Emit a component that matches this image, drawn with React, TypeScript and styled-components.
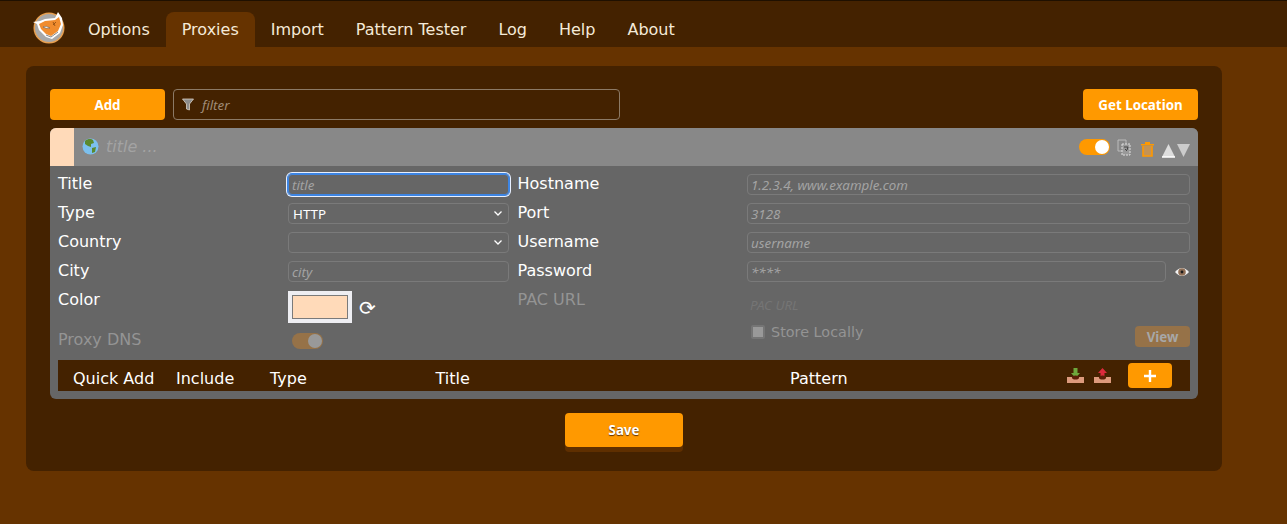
import React from 'react';
import styled, { createGlobalStyle } from 'styled-components';

const Global = createGlobalStyle`
  html, body { margin: 0; padding: 0; background: #663300; }
  body { font-family: "DejaVu Sans", sans-serif; font-size: 16px; color: #fff; height: 524px; overflow: hidden; }
  * { box-sizing: border-box; }
`;
const Nav = styled.nav`
  height: 47px; background: #442200; border-top: 1px solid #1f1000;
  display: flex; align-items: flex-end; padding-left: 32px;
`;
const LogoSlot = styled.span`width: 34px; height: 34px; margin-right: 6px; align-self: center; margin-top: 6px; display: block;`;
const Tab = styled.a<{ $active?: boolean }>`
  height: 35px; padding: 0 16px; display: flex; align-items: center; color: #f5ead8;
  font-size: 16px; border-radius: 8px 8px 0 0; background: ${p => (p.$active ? '#663300' : 'transparent')};
`;
const Section = styled.section`
  width: 1196px; height: 405px; margin: 19px 0 0 26px; padding: 23px 24px 0;
  background: #442200; border-radius: 8px;
`;
const Toolbar = styled.div`display: flex; gap: 8px; height: 31px; margin-bottom: 8px;`;
const OrangeButton = styled.button`
  border: 0; background: #ff9900; color: #fff; font: bold 13.333px "Noto Sans", sans-serif;
  border-radius: 4px; width: 115px; height: 31px; padding: 0;
`;
const FilterBox = styled.label`
  width: 447px; height: 31px; border: 1px solid #8c7a66; border-radius: 4px;
  display: flex; align-items: center; padding-left: 8px; gap: 8px; color: #a08c78;
  font: italic 13.333px "Noto Sans", sans-serif;
`;
const Spacer = styled.div`flex: 1;`;
const Card = styled.article`
  height: 271px; background: #666; border-radius: 6px; overflow: hidden;
`;
const CardHeader = styled.header`
  height: 38px; background: #888; display: flex; align-items: center;
`;
const Swatch = styled.div`width: 24px; height: 100%; background: #ffdab9; margin-right: 8px;`;
const HeaderTitle = styled.span`
  margin-left: 7px; font: italic 16px "DejaVu Sans", sans-serif; color: #a3a3a3; flex: 1; padding-bottom: 2px;
`;
const HeaderTools = styled.div`display: flex; align-items: center; padding-right: 8px;`;
const Toggle = styled.span<{ $dim?: boolean }>`
  display: flex; align-items: center; justify-content: flex-end; padding-right: 1px;
  width: 31px; height: 16px; border-radius: 8px; background: ${p => (p.$dim ? '#967248' : '#ff9900')};
`;
const Knob = styled.span<{ $dim?: boolean }>`
  width: 14px; height: 14px; border-radius: 50%; background: ${p => (p.$dim ? '#999' : '#fff')};
`;
const FormGrid = styled.div`
  display: grid; grid-template-columns: 459.5px 672.5px; padding: 8px 0 0 8px; height: 194px;
`;
const Column = styled.div`display: flex; flex-direction: column; gap: 8px;`;
const Row = styled.div`display: grid; grid-template-columns: 230px 1fr; align-items: start; height: 21px;`;
const RightRow = styled(Row)`grid-template-columns: 229.5px 1fr;`;
const TallRow = styled(Row)`height: 32px;`;
const RightTallRow = styled(RightRow)`height: 28px; margin-bottom: -4px;`;
const StoreOuter = styled(RightRow)`height: 25px;`;
const Label = styled.label<{ $dim?: boolean }>`
  font-size: 16px; line-height: 19px; color: ${p => (p.$dim ? '#949494' : '#fff')};
`;
const Field = styled.input`
  width: 100%; height: 21px; border: 1px solid #7a7a7a; border-radius: 4px; background: transparent;
  padding: 1px 3px 0; font: 13.333px "Noto Sans", sans-serif; color: #fff; outline: none;
  &::placeholder { color: #a3a3a3; font-style: italic; opacity: 1; }
`;
const CityField = styled(Field)`width: 221px;`;
const NarrowField = styled(Field)`width: 419px;`;
const FocusField = styled(Field)`
  width: 221px; border-color: #3d85e3;
  box-shadow: 0 0 0 1px #3d85e3, 0 0 0 2px #e8f0ff;
`;
const PacField = styled(Field)`
  border: 0; margin-top: 4px; &::placeholder { color: #757575; }
`;
const SelectBox = styled.div`
  width: 221px; height: 21px; border: 1px solid #7a7a7a; border-radius: 4px; padding: 0 6px 0 4px;
  display: flex; justify-content: space-between; align-items: center; font: 13.333px "Noto Sans", sans-serif;
`;
const ColorRow = styled.div`display: flex; align-items: center; gap: 7px;`;
const PasswordRow = styled(ColorRow)`gap: 0;`;
const ColorBox = styled.div`
  width: 64px; height: 32px; background: #ffdab9; border: 4px solid #eeeef2; outline: 1px solid #7a7a7a; outline-offset: -5px;
`;
const Refresh = styled.span`font-size: 20px; line-height: 32px; color: #fff; padding-top: 2px;`;
const ToggleCell = styled.div`padding: 3px 0 0 4px;`;
const StoreRow = styled.div`display: flex; justify-content: space-between; height: 25px; width: 443px;`;
const StoreLabel = styled.label`
  display: flex; align-items: center; gap: 6px; height: 20px; margin-left: 4px; color: #949494; font-size: 14.4px; line-height: 20px;
`;
const Check = styled.span`
  width: 14px; height: 14px; border: 2px solid #757575; background: #999; border-radius: 2px;
`;
const ViewButton = styled.button`
  width: 55px; height: 21px; margin-top: 4px; border: 0; padding: 0; border-radius: 4px; background: #967248;
  color: #a7a7a7; font: bold 13.333px "Noto Sans", sans-serif;
`;
const PatternHead = styled.div`
  margin: 0 8px; height: 31px; background: #442200;
  display: grid; grid-template-columns: 15px 103px 94px 165.5px 354.5px 277px 1fr; align-items: center;
  font-size: 16px; color: #fff;
`;
const HeadCell = styled.span`padding-top: 5px;`;
const HeadTools = styled.div`display: flex; align-items: center; gap: 10px;`;
const AddRow = styled.button`
  width: 44px; height: 25px; background: #ff9900; border: 0; border-radius: 4px; margin: 0 0 0 7px; padding: 0;
  display: flex; align-items: center; justify-content: center;
`;
const SaveWrap = styled.div`display: flex; justify-content: center; margin-top: 14px;`;
const SaveButton = styled.button`
  width: 118px; height: 34px; background: #ff9900; color: #fff; border: 0; border-radius: 4px;
  box-shadow: 0 5px 0 #5f2f00; font: bold 13.333px "Noto Sans", sans-serif; text-shadow: 0 1px 1px #5f2f00;
`;
const Icon = styled.svg<{ $ml?: number; $mt?: number }>`
  display: block; flex: none; margin-left: ${p => p.$ml ?? 0}px; margin-top: ${p => p.$mt ?? 0}px;
`;

const Logo = () => (
  <svg width="34" height="34" viewBox="0 0 34 34">
    <circle cx="17" cy="18" r="15.5" fill="#e8a050" />
    <circle cx="17" cy="18" r="14" fill="#a8a8a8" />
    <path d="M5 14 L1 12 L8 11 L13 9 L23 8 L26 2 L30 8 L31 15 L28 23 L20 29 L14 27 L7 20 Z" fill="#fff" />
    <path d="M7 14 L13 11 L23 10 L27 7 L29 14 L26 21 L19 26 L14 24 L9 19 Z" fill="#f08c2e" />
    <path d="M11 17 Q14 15 18 18 Q14 19 11 17 Z" fill="#fff" stroke="#6a5a4a" strokeWidth="0.6" />
    <path d="M21 15 L24 12 M23 16 L21 12" stroke="#8a4a10" strokeWidth="0.8" />
    <path d="M14 25 L19 27 L26 22" fill="none" stroke="#888" strokeWidth="1" />
  </svg>
);
const GlobeSvg = styled.svg`display: block; margin-bottom: 1px;`;
const Globe = () => (
  <GlobeSvg width="17" height="17" viewBox="0 0 17 17">
    <circle cx="8.5" cy="8.5" r="8" fill="#7cc0ee" />
    <path d="M3 3 C6 0 10 1 11 2 L12 5 L9 6 L9 9 L6 8 L3 6 Z M10 10 L14 9 L13 14 L10 15 Z" fill="#5b8a2e" />
  </GlobeSvg>
);
const Funnel = () => (
  <Icon width="12" height="13" viewBox="0 0 12 13">
    <path d="M0.5 1 H11.5 L7.5 6 V12 L4.5 11 V6 Z" fill="#8c8c8c" stroke="#d8cfc4" strokeWidth="0.8" />
  </Icon>
);
const Copy = () => (
  <Icon width="14" height="17" viewBox="0 0 14 17" $ml={7} $mt={1}>
    <path d="M1 1 H9 V12 H1 Z" fill="#888" stroke="#bbb" strokeWidth="1" />
    <path d="M5 5 H13 V16 H5 Z" fill="#999" stroke="#ddd" strokeWidth="1" strokeDasharray="2 1" />
    <path d="M7 8 H11 L10 11 M8 10 L10 12" stroke="#444" strokeWidth="1" fill="none" />
  </Icon>
);
const Trash = () => (
  <Icon width="13" height="16" viewBox="0 0 13 16" $ml={10} $mt={4}>
    <path d="M0 3 H13 V4.5 H0 Z M4 1 H9 V3 H4 Z" fill="#ff9900" />
    <path d="M2 5 V15 H11 V5" fill="#c49355" stroke="#ff9900" strokeWidth="1.6" />
  </Icon>
);
const Tri = ({ down, ml }: { down?: boolean; ml: number }) => (
  <Icon width="13" height="15" viewBox="0 0 13 15" $ml={ml} $mt={6}>
    {down ? (
      <path d="M0 1 H13 L6.5 14 Z" fill="#ccc" />
    ) : (
      <>
        <path d="M6.5 1 L13 14 H0 Z" fill="#ddd" />
        <path d="M0 14 H13" stroke="#fff" strokeWidth="1.5" />
      </>
    )}
  </Icon>
);
const Chevron = () => (
  <svg width="8" height="5" viewBox="0 0 8 5"><path d="M0.5 0.5 L4 4 L7.5 0.5" fill="none" stroke="#fff" strokeWidth="1.3" /></svg>
);
const Eye = () => (
  <Icon width="14" height="10" viewBox="0 0 14 10" $ml={9}>
    <path d="M0 5 Q7 -3 14 5 Q7 13 0 5 Z" fill="#f2f2f2" />
    <circle cx="7" cy="5" r="3.8" fill="#8f6e55" />
    <circle cx="7" cy="5" r="1.4" fill="#1c1c1c" />
  </Icon>
);
const Tray = ({ up }: { up?: boolean }) => (
  <Icon width="17" height="16" viewBox="0 0 17 16">
    <path d={up ? 'M8.5 0 L13 5 H10.5 V9 H6.5 V5 H4 Z' : 'M6.5 0 H10.5 V5 H13 L8.5 10 L4 5 H6.5 Z'} fill={up ? '#dc2a3c' : '#6ea83c'} />
    <path d="M0 9 H5 Q8.5 12 12 9 H17 V15 H0 Z" fill="#dd9a7c" />
    <ellipse cx="8.5" cy="9.5" rx="3.5" ry="2" fill="#5c1f08" />
  </Icon>
);
const Plus = () => (
  <svg width="14" height="14" viewBox="0 0 14 14"><path d="M7 1 V13 M1 7 H13" stroke="#fff" strokeWidth="2.4" /></svg>
);

export default function App() {
  return (
    <>
      <Global />
      <Nav>
        <LogoSlot><Logo /></LogoSlot>
        {['Options', 'Proxies', 'Import', 'Pattern Tester', 'Log', 'Help', 'About'].map(t => (
          <Tab key={t} $active={t === 'Proxies'}>{t}</Tab>
        ))}
      </Nav>
      <Section>
        <Toolbar>
          <OrangeButton>Add</OrangeButton>
          <FilterBox><Funnel />filter</FilterBox>
          <Spacer />
          <OrangeButton>Get Location</OrangeButton>
        </Toolbar>
        <Card>
          <CardHeader>
            <Swatch />
            <Globe />
            <HeaderTitle>title ...</HeaderTitle>
            <HeaderTools>
              <Toggle><Knob /></Toggle>
              <Copy />
              <Trash />
              <Tri ml={8} />
              <Tri down ml={2} />
            </HeaderTools>
          </CardHeader>
          <FormGrid>
            <Column>
              <Row><Label>Title</Label><FocusField placeholder="title" /></Row>
              <Row><Label>Type</Label><SelectBox>HTTP<Chevron /></SelectBox></Row>
              <Row><Label>Country</Label><SelectBox><span /><Chevron /></SelectBox></Row>
              <Row><Label>City</Label><CityField placeholder="city" /></Row>
              <TallRow><Label>Color</Label><ColorRow><ColorBox /><Refresh>⟳</Refresh></ColorRow></TallRow>
              <Row><Label $dim>Proxy DNS</Label><ToggleCell><Toggle $dim><Knob $dim /></Toggle></ToggleCell></Row>
            </Column>
            <Column>
              <RightRow><Label>Hostname</Label><Field placeholder="1.2.3.4, www.example.com" /></RightRow>
              <RightRow><Label>Port</Label><Field placeholder="3128" /></RightRow>
              <RightRow><Label>Username</Label><Field placeholder="username" /></RightRow>
              <RightRow><Label>Password</Label><PasswordRow><NarrowField placeholder="****" /><Eye /></PasswordRow></RightRow>
              <RightTallRow><Label $dim>PAC URL</Label><PacField placeholder="PAC URL" /></RightTallRow>
              <StoreOuter>
                <span />
                <StoreRow>
                  <StoreLabel><Check />Store Locally</StoreLabel>
                  <ViewButton>View</ViewButton>
                </StoreRow>
              </StoreOuter>
            </Column>
          </FormGrid>
          <PatternHead>
            <span />
            <HeadCell>Quick Add</HeadCell>
            <HeadCell>Include</HeadCell>
            <HeadCell>Type</HeadCell>
            <HeadCell>Title</HeadCell>
            <HeadCell>Pattern</HeadCell>
            <HeadTools><Tray /><Tray up /><AddRow><Plus /></AddRow></HeadTools>
          </PatternHead>
        </Card>
        <SaveWrap><SaveButton>Save</SaveButton></SaveWrap>
      </Section>
    </>
  );
}
